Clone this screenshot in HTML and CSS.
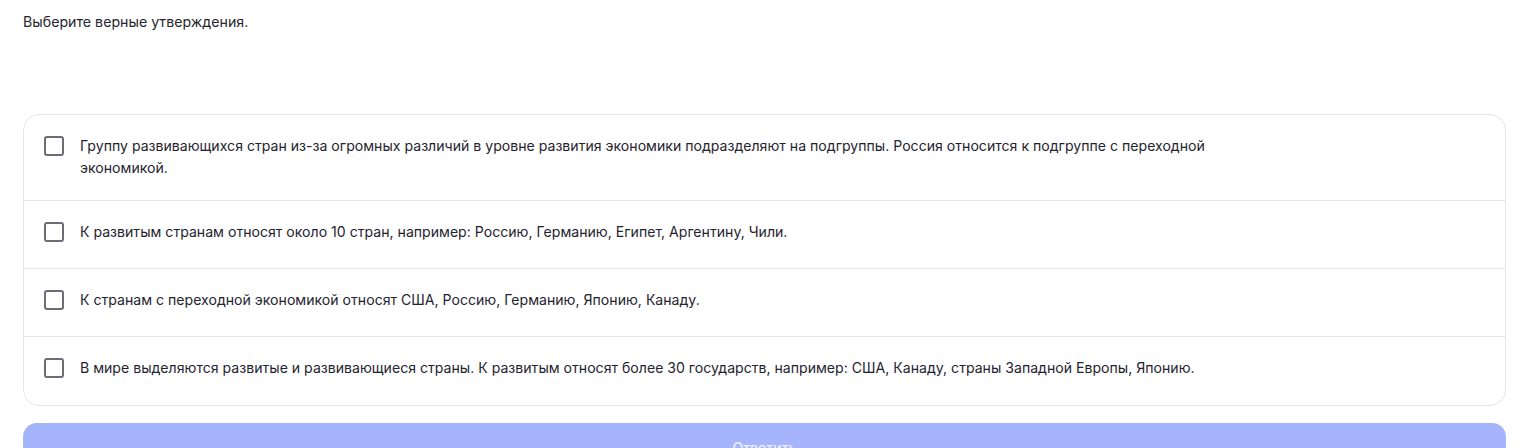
FILE: index.html
```html
<!DOCTYPE html>
<html lang="ru">
<head>
<meta charset="utf-8">
<link rel="stylesheet" href="styles.css">
</head>
<body>
<div class="page">
  <p class="prompt">Выберите верные утверждения.</p>
  <div class="card">
    <label class="option">
      <span class="box"></span>
      <span class="text">Группу развивающихся стран из-за огромных различий в уровне развития экономики подразделяют на подгруппы. Россия относится к подгруппе с переходной экономикой.</span>
    </label>
    <label class="option">
      <span class="box"></span>
      <span class="text">К развитым странам относят около 10 стран, например: Россию, Германию, Египет, Аргентину, Чили.</span>
    </label>
    <label class="option">
      <span class="box"></span>
      <span class="text">К странам с переходной экономикой относят США, Россию, Германию, Японию, Канаду.</span>
    </label>
    <label class="option">
      <span class="box"></span>
      <span class="text">В мире выделяются развитые и развивающиеся страны. К развитым относят более 30 государств, например: США, Канаду, страны Западной Европы, Японию.</span>
    </label>
  </div>
  <button class="submit" disabled>Ответить</button>
</div>
</body>
</html>
```
FILE: styles.css
```css
* { box-sizing: border-box; }
html, body { margin: 0; padding: 0; background: #fff; }
body {
  font-family: Inter, "Noto Sans", sans-serif;
  color: #1f2430;
  font-size: 14px;
}
.page {
  padding: 12px 26px 0 23px;
  display: flex;
  flex-direction: column;
}
.prompt {
  margin: 0;
  font-size: 14.2px;
  line-height: 20px;
  color: #26262e;
}
.card {
  margin-top: 82px;
  border: 1px solid #e6e6ea;
  border-radius: 16px;
  display: flex;
  flex-direction: column;
}
.option {
  display: flex;
  align-items: flex-start;
  gap: 16px;
  padding: 20px 20px 21px 20px;
  min-height: 68px;
  border-bottom: 1px solid #e6e6ea;
  cursor: pointer;
}
.option:last-child { border-bottom: none; }
.box {
  flex: none;
  width: 20px;
  height: 20px;
  margin-top: 1px;
  border: 2px solid #6c6c76;
  border-radius: 3px;
  background: #fff;
}
.text {
  max-width: 1140px;
  line-height: 22px;
  font-size: 14.1px;
  color: #1f2430;
}
.submit {
  margin-top: 17px;
  height: 48px;
  border: none;
  border-radius: 14px;
  background: #a5b4fb;
  color: #eef0ff;
  font-family: Inter, "Noto Sans", sans-serif;
  font-size: 14px;
  font-weight: 500;
}
```
